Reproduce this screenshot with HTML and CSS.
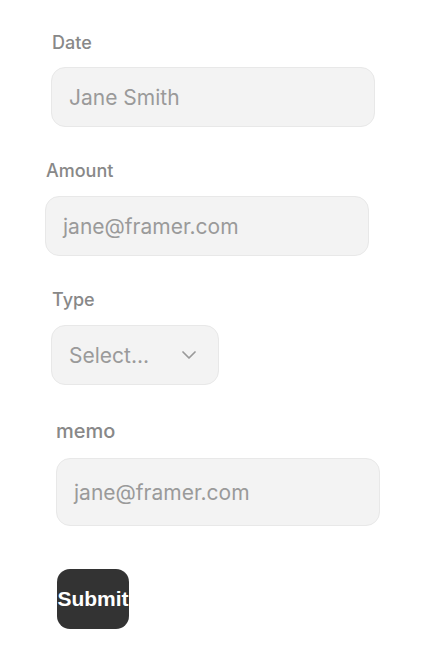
FILE: index.html
```html
<!DOCTYPE html>
<html lang="en">
<head>
<meta charset="utf-8">
<title>Form</title>
<link rel="stylesheet" href="styles.css">
</head>
<body>
<form class="form">
  <div class="field field-date">
    <label class="label">Date</label>
    <div class="input"><span class="placeholder">Jane Smith</span></div>
  </div>
  <div class="field field-amount">
    <label class="label">Amount</label>
    <div class="input"><span class="placeholder">jane@framer.com</span></div>
  </div>
  <div class="field field-type">
    <label class="label">Type</label>
    <div class="input select">
      <span class="placeholder">Select...</span>
      <svg class="chevron" width="14" height="8" viewBox="0 0 14 8" fill="none"><path d="M1 1L7 7L13 1" stroke="#999" stroke-width="1.7" stroke-linecap="round" stroke-linejoin="round"/></svg>
    </div>
  </div>
  <div class="field field-memo">
    <label class="label label-lg">memo</label>
    <div class="input input-tall"><span class="placeholder">jane@framer.com</span></div>
  </div>
  <div class="actions">
    <button type="button" class="submit">Submit</button>
  </div>
</form>
</body>
</html>
```

FILE: styles.css
```css
* { box-sizing: border-box; }
html, body { margin: 0; padding: 0; background: #fff; }
body { font-family: Inter, "Noto Sans", sans-serif; }

.form {
  display: flex;
  flex-direction: column;
  padding-top: 31px;
}

.field {
  display: flex;
  flex-direction: column;
  gap: 13px;
}

.label {
  font-size: 18px;
  line-height: 23px;
  font-weight: 500;
  color: #888888;
}

.label-lg {
  font-size: 20px;
  line-height: 24px;
}

.input {
  display: flex;
  align-items: center;
  width: 324px;
  height: 60px;
  padding: 0 17px;
  background: #f3f3f3;
  border: 1px solid #e8e8e8;
  border-radius: 14px;
}

.input-tall { height: 68px; }

.placeholder {
  font-size: 21px;
  color: #9a9a9a;
  white-space: nowrap;
}

.select {
  width: 168px;
  justify-content: space-between;
  padding-right: 22px;
}

.chevron { display: block; }

.field-date { padding-left: 51px; }
.field-date .label { padding-left: 1px; }

.field-amount { padding-left: 45px; margin-top: 32px; gap: 14px; }
.field-amount .label { padding-left: 1px; }

.field-type { padding-left: 51px; margin-top: 32px; gap: 14px; }
.field-type .label { padding-left: 1px; }

.field-memo { padding-left: 56px; margin-top: 34px; gap: 15px; }

.actions { padding-left: 57px; margin-top: 43px; }

.submit {
  width: 72px;
  height: 60px;
  padding: 0;
  border: none;
  border-radius: 13px;
  background: #333333;
  color: #ffffff;
  font-family: "Liberation Sans", Arial, sans-serif;
  font-weight: 700;
  font-size: 21px;
  white-space: nowrap;
  display: flex;
  align-items: center;
  justify-content: center;
}
```
